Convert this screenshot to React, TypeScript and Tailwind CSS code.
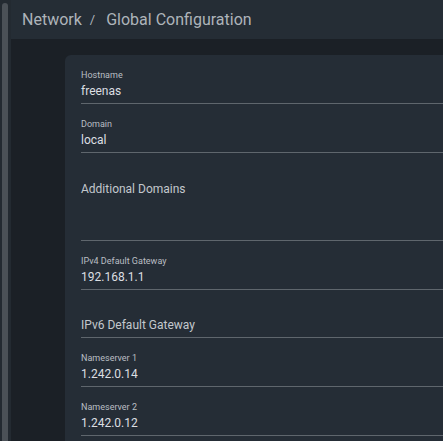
import type { ReactNode } from 'react';

const font = { fontFamily: 'Roboto, "Noto Sans", sans-serif' };

function Field({ label, value }: { label: string; value: string }) {
	return (
		<div className="mt-[14px] border-b border-[#5f666d] pb-[3px]">
			<div className="text-[9px] leading-[12px] text-[#b9bec3]">{label}</div>
			<div className="pt-px text-[12px] leading-[18px] text-[#dcdfe2]">{value}</div>
		</div>
	);
}

function Placeholder({ children, className }: { children: ReactNode; className: string }) {
	return (
		<div className={`mt-[14px] border-b border-[#5f666d] ${className}`}>
			<div className="text-[12px] leading-[18px] text-[#c3c8cd]">{children}</div>
		</div>
	);
}

export default function App() {
	return (
		<div
			className="flex h-[441px] w-[443px] overflow-hidden bg-[#1b2026]"
			style={font}
		>
			<div className="w-[11px] shrink-0 bg-[#232a31] pl-[2px] pt-[3px]">
				<div className="h-full w-[6px] rounded-t-[3px] bg-[#4b5157]" />
			</div>
			<div className="flex min-w-0 flex-1 flex-col">
				<div className="flex h-[39px] shrink-0 items-center bg-[#252d35] pl-[11px] text-[16px] text-[#aeb4ba]">
					<span>Network</span>
					<span className="ml-[8px] mr-[11px] text-[13px]">/</span>
					<span>Global Configuration</span>
				</div>
				<div className="flex-1 pl-[54px] pt-[16px]">
					<div className="flex h-full w-[500px] flex-col rounded-tl-[6px] bg-[#252d36] pl-[16px]">
						<Field label="Hostname" value="freenas" />
						<Field label="Domain" value="local" />
						<Placeholder className="pt-[13px] pb-[42px]">Additional Domains</Placeholder>
						<Field label="IPv4 Default Gateway" value="192.168.1.1" />
						<Placeholder className="pt-[12px] pb-[3px]">IPv6 Default Gateway</Placeholder>
						<Field label="Nameserver 1" value="1.242.0.14" />
						<Field label="Nameserver 2" value="1.242.0.12" />
					</div>
				</div>
			</div>
		</div>
	);
}
